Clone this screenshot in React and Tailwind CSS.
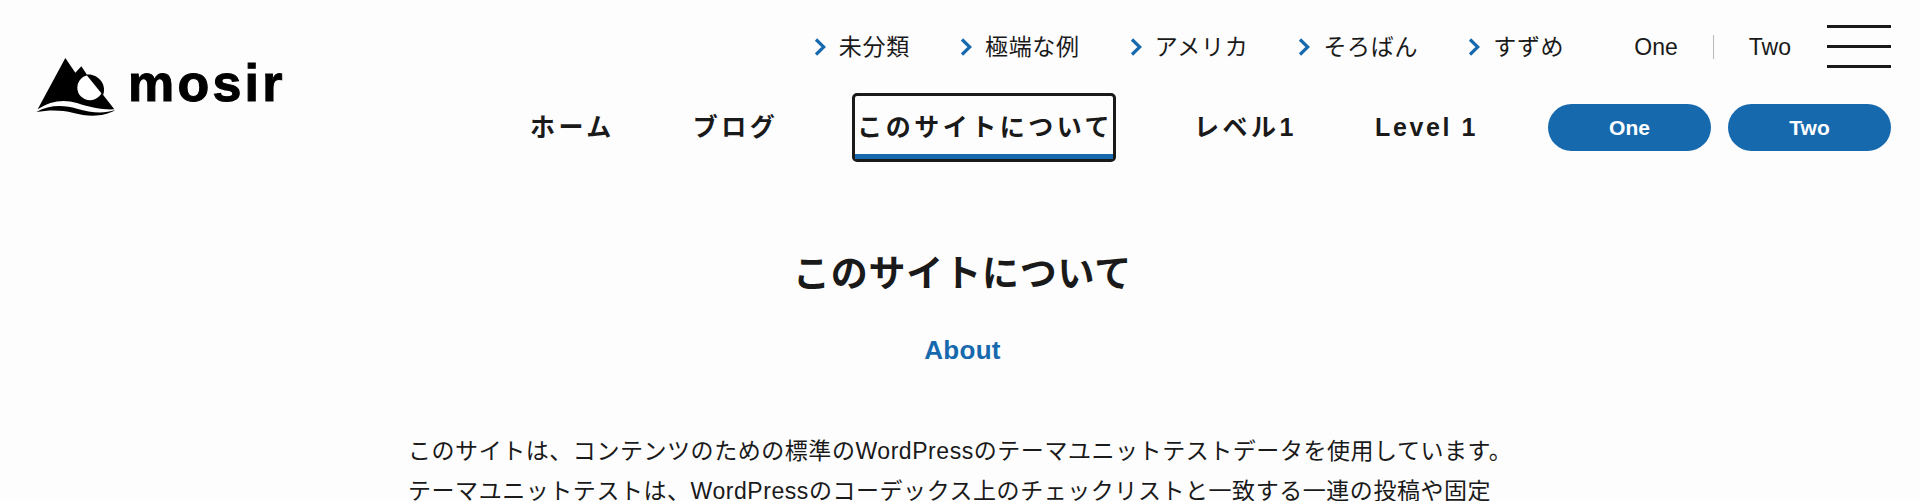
const font = { fontFamily: '"Liberation Sans", "Noto Sans CJK JP", sans-serif' }

const topLinks = ['未分類', '極端な例', 'アメリカ', 'そろばん', 'すずめ']

function Chevron() {
  return (
    <svg width="12" height="18" viewBox="0 0 12 18" fill="none" className="shrink-0">
      <path d="M2 1.5l7.8 7.5L2 16.5" stroke="#1769ae" strokeWidth="3.2" />
    </svg>
  )
}

function Logo() {
  return (
    <svg width="80" height="58" viewBox="48 22 238 174">
      <path
        d="M135 22L165 66L183 47L200 72L248 132L282 176C250 178 210 170 170 157C130 145 90 150 52 176Z"
        fill="#000"
      />
      <circle cx="209" cy="111" r="38" fill="#fff" />
      <path d="M198 72C225 66 262 95 248 134Z" fill="#000" />
      <path
        d="M48 184C85 162 130 162 170 174C210 186 250 190 285 178C250 200 200 198 160 187C120 177 85 178 48 184Z"
        fill="#000"
      />
    </svg>
  )
}

export default function App() {
  return (
    <div className="h-screen overflow-hidden bg-[#fdfdfd] text-[#1a1a1a]" style={font}>
      <header className="flex justify-between pl-[36px] pr-[29px]">
        <a className="flex items-start gap-[12px] mt-[58px]">
          <Logo />
          <span className="text-[52px] leading-[50px] font-bold tracking-[3.2px] text-black [-webkit-text-stroke:1px_#000]">mosir</span>
        </a>
        <div className="flex flex-col items-end pt-[25px]">
          <div className="flex items-center">
            <ul className="flex items-center gap-[50px] mr-[70px]">
              {topLinks.map(label => (
                <li key={label} className="flex items-center gap-[13px]">
                  <Chevron />
                  <span className="text-[23px] leading-[32px] tracking-[0.7px]">{label}</span>
                </li>
              ))}
            </ul>
            <span className="text-[23px] leading-[32px]">One</span>
            <span className="w-px h-[24px] bg-[#bbbbbb] mx-[35px]" />
            <span className="text-[23px] leading-[32px]">Two</span>
            <div className="flex flex-col gap-[17px] w-[64px] ml-[36px]">
              <span className="h-[3px] bg-[#1a1a1a]" />
              <span className="h-[3px] bg-[#1a1a1a]" />
              <span className="h-[3px] bg-[#1a1a1a]" />
            </div>
          </div>
          <nav className="flex items-center mt-[25px] text-[25px] font-bold tracking-[3.5px]">
            <a>ホーム</a>
            <a className="ml-[78px]">ブログ</a>
            <a className="ml-[74px] border-[3px] border-[#1a1a1a] rounded-[5px]">
              <span className="block h-[63px] pl-[2px] pt-[15px] leading-[32px] border-b-[5px] border-[#1769ae]">
                このサイトについて
              </span>
            </a>
            <a className="ml-[78px]">レベル1</a>
            <a className="ml-[78px] tracking-[2.6px]">Level 1</a>
            <div className="flex gap-[17px] ml-[70px] tracking-normal">
              <a className="flex items-center justify-center w-[163px] h-[47px] rounded-full bg-[#1769ae] text-white text-[21px]">One</a>
              <a className="flex items-center justify-center w-[163px] h-[47px] rounded-full bg-[#1769ae] text-white text-[21px]">Two</a>
            </div>
          </nav>
        </div>
      </header>
      <main className="w-[1104px] mx-auto">
        <h1 className="mt-[89px] pl-[5px] text-center text-[37px] leading-[48px] font-bold tracking-[0.8px]">このサイトについて</h1>
        <p className="mt-[35px] pl-[5px] text-center text-[26px] leading-[32px] font-bold tracking-[0.3px] text-[#1769ae]">About</p>
        <p className="mt-[65px] whitespace-nowrap text-[23px] leading-[40px] tracking-[0.55px]">
          このサイトは、コンテンツのための標準のWordPressのテーマユニットテストデータを使用しています。<br />
          テーマユニットテストは、WordPressのコーデックス上のチェックリストと一致する一連の投稿や固定
        </p>
      </main>
    </div>
  )
}
